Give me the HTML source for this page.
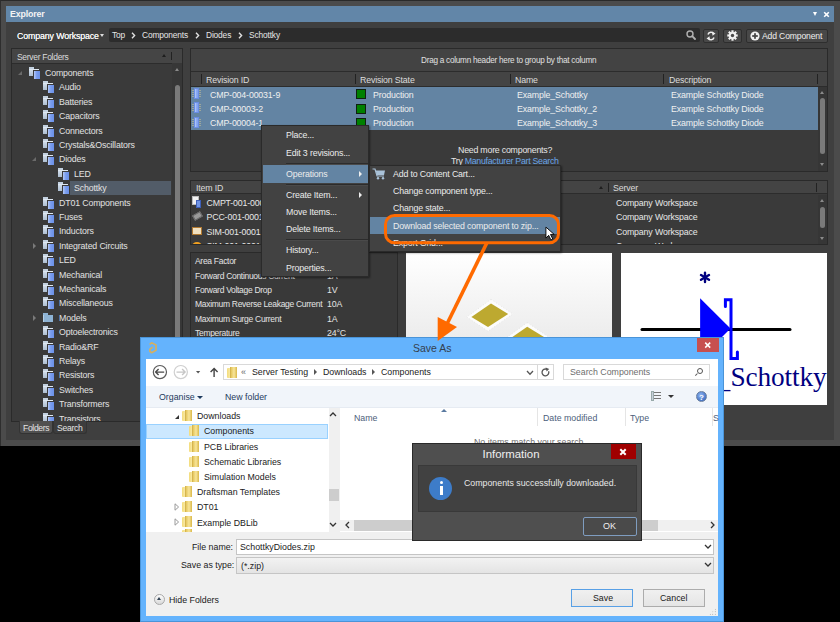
<!DOCTYPE html><html><head><meta charset="utf-8"><style>
*{box-sizing:border-box;margin:0;padding:0}
html,body{width:840px;height:622px;overflow:hidden;background:#000}
body{position:relative;font-family:"Liberation Sans",sans-serif;font-size:8.8px;letter-spacing:-0.15px;color:#e2e2e2}
.a{position:absolute}
.t{position:absolute;white-space:nowrap;line-height:11px}
.cico{position:absolute;width:11px;height:12px}
.cico i{position:absolute;left:0;top:2px;width:9.5px;height:6.5px;background:linear-gradient(#d0dcea,#aebfd2);border-top:1px solid #dfe8f2}
.cico i:before{content:"";position:absolute;left:0;top:-3px;width:4.5px;height:2px;background:#c3d1e0}
.cico b{position:absolute;left:4.5px;top:3.5px;width:6px;height:8px;background:linear-gradient(90deg,#b3c9f8,#7a9dee 45%,#6a90e8);box-shadow:-1px -1px 0 #3b3b3b}
.fold{position:absolute;width:10px;height:7px;background:linear-gradient(90deg,#b5d0e8 0 1px,#8eb3d4 1px)}
.fold:before{content:"";position:absolute;left:0;top:-2px;width:5px;height:2px;background:#8eb3d4}
.chip{position:absolute;width:9px;height:11px}
.chip b{position:absolute;left:2px;top:0;width:5.5px;height:10.5px;background:linear-gradient(90deg,#bcd0ff,#8eaef4 40%,#7d9fee);border:1px solid #6a8de4}
.chip i{position:absolute;left:0;top:1.5px;width:9.5px;height:8px;background:repeating-linear-gradient(rgba(205,195,150,.55) 0 1px,transparent 1px 2px)}
.sq{position:absolute;width:10px;height:10px;background:#008000;border:1px solid #102010}
.menu{position:absolute;background:#424242;border:1px solid #2a2a2a;box-shadow:1px 1px 2px rgba(0,0,0,.45)}
.hl{position:absolute;background:#6384a3}
.w{color:#1a1a1a}
.fd{position:absolute;width:10px;height:11px}
.fd:before{content:"";position:absolute;left:0;top:1px;width:9px;height:10px;background:linear-gradient(90deg,#f3dc7c,#fbeeb0 45%,#e8c859);border-radius:1px 0 0 1px}
.fd:after{content:"";position:absolute;left:3px;top:0;width:6px;height:11px;background:linear-gradient(90deg,#e4c65c,#f8e59a 50%,#d9b84a);border-left:1px solid #d6b550}
</style></head><body>
<div class="a" style="left:0;top:0;width:840px;height:446px;background:#4b4b4b;border-top:1px solid #2a2a2a;border-left:1px solid #2e2e2e"></div>
<div class="a" style="left:6px;top:22px;width:828px;height:418px;background:#3f3f3f"></div>
<div class="a" style="left:6px;top:6px;width:828px;height:16px;background:#6286a8"></div>
<div class="t" style="left:10px;top:9px;font-weight:bold;font-size:8.8px;color:#f4f4f4">Explorer</div>
<div class="a" style="left:812.5px;top:12px;width:0;height:0;border-left:2.5px solid transparent;border-right:2.5px solid transparent;border-top:4px solid #fff"></div>
<svg class="a" style="left:822px;top:10px" width="9" height="9" viewBox="0 0 9 9"><path d="M2.2,2.2 L6.8,6.8 M6.8,2.2 L2.2,6.8" stroke="#fff" stroke-width="1.6"/></svg>
<div class="t" style="left:17px;top:31px;font-size:8.8px;letter-spacing:-0.12px;color:#f4f4f4;text-shadow:0 0 0.3px #fff">Company Workspace</div>
<div class="a" style="left:100px;top:34px;width:0;height:0;border-left:2.5px solid transparent;border-right:2.5px solid transparent;border-top:3px solid #ddd"></div>
<div class="a" style="left:109px;top:28px;width:591px;height:14px;background:#2c2c2c;border-radius:2px"></div>
<div class="t" style="left:112px;top:30px;font-size:8.4px;color:#e6e6e6">Top</div>
<svg class="a" style="left:131px;top:32px" width="5" height="7" viewBox="0 0 5 7"><polyline points="1,0.8 3.6,3.5 1,6.2" fill="none" stroke="#e0e0e0" stroke-width="1.4"/></svg>
<div class="t" style="left:142px;top:30px;font-size:8.4px;color:#e6e6e6">Components</div>
<svg class="a" style="left:195px;top:32px" width="5" height="7" viewBox="0 0 5 7"><polyline points="1,0.8 3.6,3.5 1,6.2" fill="none" stroke="#e0e0e0" stroke-width="1.4"/></svg>
<div class="t" style="left:206px;top:30px;font-size:8.4px;color:#e6e6e6">Diodes</div>
<svg class="a" style="left:238px;top:32px" width="5" height="7" viewBox="0 0 5 7"><polyline points="1,0.8 3.6,3.5 1,6.2" fill="none" stroke="#e0e0e0" stroke-width="1.4"/></svg>
<div class="t" style="left:249px;top:30px;font-size:8.4px;color:#e6e6e6">Schottky</div>
<svg class="a" style="left:686px;top:30px" width="10" height="10" viewBox="0 0 10 10"><circle cx="4" cy="4" r="3" fill="none" stroke="#b0b0b0" stroke-width="1.4"/><line x1="6.2" y1="6.2" x2="9" y2="9" stroke="#b0b0b0" stroke-width="1.8" stroke-linecap="round"/></svg>
<div class="a" style="left:703px;top:29px;width:16px;height:14px;background:#484848;border:1px solid #2e2e2e;border-radius:2px"></div>
<svg class="a" style="left:705px;top:30px" width="12" height="12" viewBox="0 0 12 12"><path d="M3,4.5 A3.2,3.2 0 0 1 8.8,3.8" fill="none" stroke="#eee" stroke-width="1.5"/><polygon points="7,1.5 10.5,3.5 7.5,5.8" fill="#eee"/><path d="M9,7.5 A3.2,3.2 0 0 1 3.2,8.2" fill="none" stroke="#eee" stroke-width="1.5"/><polygon points="5,10.5 1.5,8.5 4.5,6.2" fill="#eee"/></svg>
<div class="a" style="left:723px;top:29px;width:19px;height:14px;background:#484848;border:1px solid #2e2e2e;border-radius:2px"></div>
<svg class="a" style="left:727px;top:30px" width="11" height="11" viewBox="0 0 11 11"><g fill="#f2f2f2"><circle cx="5.5" cy="5.5" r="3.6"/><rect x="4.4" y="0.3" width="2.2" height="10.4"/><rect x="0.3" y="4.4" width="10.4" height="2.2"/><rect x="4.4" y="0.3" width="2.2" height="10.4" transform="rotate(45 5.5 5.5)"/><rect x="4.4" y="0.3" width="2.2" height="10.4" transform="rotate(-45 5.5 5.5)"/></g><circle cx="5.5" cy="5.5" r="1.7" fill="#484848"/></svg>
<div class="a" style="left:746px;top:29px;width:82px;height:14px;background:#484848;border:1px solid #2e2e2e;border-radius:2px"></div>
<svg class="a" style="left:750px;top:31px" width="10" height="10" viewBox="0 0 10 10"><circle cx="5" cy="5" r="4.6" fill="#f0f0f0"/><rect x="4.1" y="2.2" width="1.8" height="5.6" fill="#484848"/><rect x="2.2" y="4.1" width="5.6" height="1.8" fill="#484848"/></svg>
<div class="t" style="left:762px;top:31px;font-size:8.6px;color:#eee">Add Component</div>
<div class="a" style="left:11px;top:48px;width:172px;height:374px;background:#3a3a3a;border:1px solid #2a2a2a"></div>
<div class="a" style="left:12px;top:49px;width:170px;height:15px;background:#454545;border-bottom:1px solid #2c2c2c"></div>
<div class="t" style="left:17px;top:51.5px;color:#dcdcdc;font-size:8.5px;letter-spacing:-0.3px">Server Folders</div>
<div class="a" style="left:162px;top:54px;width:0;height:0;border-left:2.5px solid transparent;border-right:2.5px solid transparent;border-bottom:3px solid #1e1e1e"></div>
<div class="a" style="left:171px;top:52px;width:1px;height:8px;background:#222"></div>
<div class="a" style="left:172px;top:63px;width:10px;height:358px;background:#373737"></div>
<div class="a" style="left:175px;top:68px;width:0;height:0;border-left:2.5px solid transparent;border-right:2.5px solid transparent;border-bottom:3px solid #8a8a8a"></div>
<div class="a" style="left:175px;top:85px;width:5px;height:300px;background:#7a7a7a;border-radius:3px"></div>
<div class="a" style="left:12px;top:64px;width:160px;height:357px;overflow:hidden">
<div class="a" style="left:6px;top:7px;width:0;height:0;border-left:4px solid transparent;border-bottom:4px solid #6a6a6a"></div>
<div class="cico" style="left:17px;top:3px"><i></i><b></b></div>
<div class="t" style="left:33px;top:4px">Components</div>
<div class="cico" style="left:31px;top:17px"><i></i><b></b></div>
<div class="t" style="left:47px;top:18px">Audio</div>
<div class="cico" style="left:31px;top:32px"><i></i><b></b></div>
<div class="t" style="left:47px;top:33px">Batteries</div>
<div class="cico" style="left:31px;top:46px"><i></i><b></b></div>
<div class="t" style="left:47px;top:47px">Capacitors</div>
<div class="cico" style="left:31px;top:61px"><i></i><b></b></div>
<div class="t" style="left:47px;top:62px">Connectors</div>
<div class="cico" style="left:31px;top:75px"><i></i><b></b></div>
<div class="t" style="left:47px;top:76px">Crystals&amp;Oscillators</div>
<div class="a" style="left:20px;top:93px;width:0;height:0;border-left:4px solid transparent;border-bottom:4px solid #6a6a6a"></div>
<div class="cico" style="left:31px;top:89px"><i></i><b></b></div>
<div class="t" style="left:47px;top:90px">Diodes</div>
<div class="cico" style="left:46px;top:104px"><i></i><b></b></div>
<div class="t" style="left:62px;top:105px">LED</div>
<div class="a" style="left:58px;top:117px;width:101px;height:14px;background:#525c68"></div>
<div class="cico" style="left:46px;top:118px"><i></i><b></b></div>
<div class="t" style="left:62px;top:119px">Schottky</div>
<div class="cico" style="left:31px;top:133px"><i></i><b></b></div>
<div class="t" style="left:47px;top:134px">DT01 Components</div>
<div class="cico" style="left:31px;top:147px"><i></i><b></b></div>
<div class="t" style="left:47px;top:148px">Fuses</div>
<div class="cico" style="left:31px;top:161px"><i></i><b></b></div>
<div class="t" style="left:47px;top:162px">Inductors</div>
<div class="a" style="left:21px;top:179px;width:0;height:0;border-top:3px solid transparent;border-bottom:3px solid transparent;border-left:3px solid #7a7a7a"></div>
<div class="cico" style="left:31px;top:176px"><i></i><b></b></div>
<div class="t" style="left:47px;top:177px">Integrated Circuits</div>
<div class="cico" style="left:31px;top:190px"><i></i><b></b></div>
<div class="t" style="left:47px;top:191px">LED</div>
<div class="cico" style="left:31px;top:205px"><i></i><b></b></div>
<div class="t" style="left:47px;top:206px">Mechanical</div>
<div class="cico" style="left:31px;top:219px"><i></i><b></b></div>
<div class="t" style="left:47px;top:220px">Mechanicals</div>
<div class="cico" style="left:31px;top:233px"><i></i><b></b></div>
<div class="t" style="left:47px;top:234px">Miscellaneous</div>
<div class="a" style="left:21px;top:251px;width:0;height:0;border-top:3px solid transparent;border-bottom:3px solid transparent;border-left:3px solid #7a7a7a"></div>
<div class="fold" style="left:31px;top:251px"></div>
<div class="t" style="left:47px;top:249px">Models</div>
<div class="cico" style="left:31px;top:262px"><i></i><b></b></div>
<div class="t" style="left:47px;top:263px">Optoelectronics</div>
<div class="cico" style="left:31px;top:277px"><i></i><b></b></div>
<div class="t" style="left:47px;top:278px">Radio&amp;RF</div>
<div class="cico" style="left:31px;top:291px"><i></i><b></b></div>
<div class="t" style="left:47px;top:292px">Relays</div>
<div class="cico" style="left:31px;top:305px"><i></i><b></b></div>
<div class="t" style="left:47px;top:306px">Resistors</div>
<div class="cico" style="left:31px;top:320px"><i></i><b></b></div>
<div class="t" style="left:47px;top:321px">Switches</div>
<div class="cico" style="left:31px;top:334px"><i></i><b></b></div>
<div class="t" style="left:47px;top:335px">Transformers</div>
<div class="cico" style="left:31px;top:349px"><i></i><b></b></div>
<div class="t" style="left:47px;top:350px">Transistors</div>
</div>
<div class="a" style="left:19px;top:421px;width:34px;height:13px;background:#505050;border-radius:0 0 3px 3px;border:1px solid #333;border-top:none"></div>
<div class="t" style="left:23px;top:423px;color:#e4e4e4;font-size:8.6px;letter-spacing:-0.35px">Folders</div>
<div class="a" style="left:53px;top:421px;width:34px;height:13px;background:#3d3d3d;border-radius:0 0 3px 3px;border:1px solid #333;border-top:none"></div>
<div class="t" style="left:57px;top:423px;color:#e4e4e4;font-size:8.6px;letter-spacing:-0.3px">Search</div>
<div class="a" style="left:190px;top:48px;width:638px;height:124px;background:#3a3a3a;border:1px solid #2a2a2a"></div>
<div class="a" style="left:191px;top:49px;width:636px;height:23px;background:#434343;border-bottom:1px solid #2c2c2c"></div>
<div class="t" style="left:421px;top:55px;font-size:8.2px;letter-spacing:-0.25px;color:#e0e0e0">Drag a column header here to group by that column</div>
<div class="a" style="left:191px;top:72px;width:636px;height:15px;background:#444;border-bottom:1px solid #2c2c2c"></div>
<div class="a" style="left:201px;top:74px;width:1px;height:10px;background:#222"></div>
<div class="a" style="left:355px;top:74px;width:1px;height:10px;background:#222"></div>
<div class="a" style="left:510px;top:74px;width:1px;height:10px;background:#222"></div>
<div class="a" style="left:663px;top:74px;width:1px;height:10px;background:#222"></div>
<div class="a" style="left:817px;top:74px;width:1px;height:10px;background:#222"></div>
<div class="t" style="left:206px;top:75px;color:#dcdcdc">Revision ID</div>
<div class="t" style="left:360px;top:75px;color:#dcdcdc">Revision State</div>
<div class="t" style="left:515px;top:75px;color:#dcdcdc">Name</div>
<div class="t" style="left:669px;top:75px;color:#dcdcdc">Description</div>
<div class="a" style="left:191px;top:87px;width:627px;height:43px;background:#6384a3"></div>
<div class="chip" style="left:191.5px;top:88px"><i></i><b></b></div>
<div class="t" style="left:210px;top:90px;color:#f0f0f0">CMP-004-00031-9</div>
<div class="sq" style="left:356px;top:89px"></div>
<div class="t" style="left:373px;top:90px;color:#f0f0f0">Production</div>
<div class="t" style="left:517px;top:90px;color:#f0f0f0">Example_Schottky</div>
<div class="t" style="left:671px;top:90px;color:#f0f0f0">Example Schottky Diode</div>
<div class="chip" style="left:191.5px;top:102px"><i></i><b></b></div>
<div class="t" style="left:210px;top:104px;color:#f0f0f0">CMP-00003-2</div>
<div class="sq" style="left:356px;top:104px"></div>
<div class="t" style="left:373px;top:104px;color:#f0f0f0">Production</div>
<div class="t" style="left:517px;top:104px;color:#f0f0f0">Example_Schottky_2</div>
<div class="t" style="left:671px;top:104px;color:#f0f0f0">Example Schottky Diode</div>
<div class="chip" style="left:191.5px;top:117px"><i></i><b></b></div>
<div class="t" style="left:210px;top:118px;color:#f0f0f0">CMP-00004-1</div>
<div class="sq" style="left:356px;top:118px"></div>
<div class="t" style="left:373px;top:118px;color:#f0f0f0">Production</div>
<div class="t" style="left:517px;top:118px;color:#f0f0f0">Example_Schottky_3</div>
<div class="t" style="left:671px;top:118px;color:#f0f0f0">Example Schottky Diode</div>
<div class="t" style="left:458px;top:145px;color:#e6e6e6;letter-spacing:-0.22px">Need more components?</div>
<div class="t" style="left:451px;top:155.5px;color:#e6e6e6;letter-spacing:-0.28px">Try <span style="color:#6aa6e8">Manufacturer Part Search</span></div>
<div class="a" style="left:818px;top:87px;width:9px;height:84px;background:#363636"></div>
<div class="a" style="left:820px;top:91px;width:0;height:0;border-left:2.5px solid transparent;border-right:2.5px solid transparent;border-bottom:3px solid #8a8a8a"></div>
<div class="a" style="left:820px;top:98px;width:5px;height:56px;background:#7a7a7a;border-radius:3px"></div>
<div class="a" style="left:820px;top:163px;width:0;height:0;border-left:2.5px solid transparent;border-right:2.5px solid transparent;border-top:3px solid #8a8a8a"></div>
<div class="a" style="left:190px;top:180px;width:638px;height:65px;background:#3a3a3a;border:1px solid #2a2a2a"></div>
<div class="a" style="left:191px;top:181px;width:636px;height:13px;background:#444;border-bottom:1px solid #2c2c2c"></div>
<div class="t" style="left:196px;top:183px;color:#dcdcdc">Item ID</div>
<div class="a" style="left:599px;top:186px;width:0;height:0;border-left:2.5px solid transparent;border-right:2.5px solid transparent;border-bottom:3px solid #1e1e1e"></div>
<div class="a" style="left:608px;top:183px;width:1px;height:9px;background:#222"></div>
<div class="a" style="left:816px;top:183px;width:1px;height:9px;background:#222"></div>
<div class="t" style="left:613px;top:183px;color:#dcdcdc">Server</div>
<div class="a" style="left:191px;top:195px;width:626px;height:49px;overflow:hidden">
<div class="a" style="left:1px;top:1px;width:7px;height:9px;background:#f2f2f2;border:1px solid #bbb"></div><div class="a" style="left:5px;top:5px;width:5px;height:8px;background:#6f93e6;border:1px solid #3d5fb8"></div>
<div class="t" style="left:15.5px;top:3px;color:#e8e8e8">CMPT-001-0001</div>
<div class="t" style="left:425px;top:3px;color:#e8e8e8">Company Workspace</div>
<div class="a" style="left:2px;top:18px;width:9px;height:6px;background:#9a9a9a;transform:rotate(-30deg);border:1px solid #666"></div>
<div class="t" style="left:15.5px;top:17px;color:#e8e8e8">PCC-001-0001</div>
<div class="t" style="left:425px;top:17px;color:#e8e8e8">Company Workspace</div>
<div class="a" style="left:1px;top:32px;width:10px;height:8px;background:#f0e0c0;border:1px solid #b07830"></div>
<div class="t" style="left:15.5px;top:32px;color:#e8e8e8">SIM-001-0001</div>
<div class="t" style="left:425px;top:32px;color:#e8e8e8">Company Workspace</div>
<div class="a" style="left:1px;top:47px;width:10px;height:8px;background:#f0a020;border-radius:50% 50% 0 0"></div>
<div class="t" style="left:15.5px;top:46px;color:#e8e8e8">SIM-001-0001</div>
<div class="t" style="left:425px;top:46px;color:#e8e8e8">Company Workspace</div>
</div>
<div class="a" style="left:818px;top:195px;width:9px;height:49px;background:#363636"></div>
<div class="a" style="left:820px;top:199px;width:0;height:0;border-left:2.5px solid transparent;border-right:2.5px solid transparent;border-bottom:3px solid #8a8a8a"></div>
<div class="a" style="left:820px;top:207px;width:5px;height:21px;background:#7a7a7a;border-radius:3px"></div>
<div class="a" style="left:820px;top:237px;width:0;height:0;border-left:2.5px solid transparent;border-right:2.5px solid transparent;border-top:3px solid #8a8a8a"></div>
<div class="a" style="left:190px;top:252px;width:208px;height:95px;background:#393939;border:1px solid #2a2a2a"></div>
<div class="t" style="left:195px;top:256px;color:#e4e4e4;font-size:8.5px;letter-spacing:-0.3px">Area Factor</div>
<div class="t" style="left:195px;top:271px;color:#e4e4e4;font-size:8.5px;letter-spacing:-0.3px">Forward Continuous Current</div>
<div class="t" style="left:327px;top:271px;color:#e4e4e4">1A</div>
<div class="t" style="left:195px;top:285px;color:#e4e4e4;font-size:8.5px;letter-spacing:-0.3px">Forward Voltage Drop</div>
<div class="t" style="left:327px;top:285px;color:#e4e4e4">1V</div>
<div class="t" style="left:195px;top:299px;color:#e4e4e4;font-size:8.5px;letter-spacing:-0.3px">Maximum Reverse Leakage Current</div>
<div class="t" style="left:327px;top:299px;color:#e4e4e4">10A</div>
<div class="t" style="left:195px;top:314px;color:#e4e4e4;font-size:8.5px;letter-spacing:-0.3px">Maximum Surge Current</div>
<div class="t" style="left:327px;top:314px;color:#e4e4e4">1A</div>
<div class="t" style="left:195px;top:328px;color:#e4e4e4;font-size:8.5px;letter-spacing:-0.3px">Temperature</div>
<div class="t" style="left:327px;top:328px;color:#e4e4e4">24&#176;C</div>
<div class="a" style="left:398px;top:252px;width:8px;height:95px;background:#3c3c3c"></div>
<div class="a" style="left:406px;top:253px;width:206px;height:90px;background:linear-gradient(#ffffff,#ebebeb)"></div>
<svg class="a" style="left:406px;top:253px" width="206" height="90" viewBox="0 0 206 90"><polygon points="85.0,46.3 106.8,61.0 82.0,78.2 60.8,64.0" fill="#fcfcfc" stroke="#d8d8d8" stroke-width="0.6" stroke-dasharray="1 2"/><polygon points="85.0,50.4 102.2,61.0 82.0,74.0 65.4,64.0" fill="#bda930"/><polygon points="121.2,69.6 143.0,84.3 118.2,101.5 97.0,87.3" fill="#fcfcfc" stroke="#d8d8d8" stroke-width="0.6" stroke-dasharray="1 2"/><polygon points="121.2,73.7 138.4,84.3 118.2,97.3 101.6,87.3" fill="#bda930"/></svg>
<div class="a" style="left:621px;top:253px;width:206px;height:152px;background:#fff"></div>
<svg class="a" style="left:621px;top:253px" width="206" height="152" viewBox="0 0 206 152"><g stroke="#000080" stroke-width="2.4" stroke-linecap="round"><line x1="84" y1="19.8" x2="84" y2="29"/><line x1="80" y1="22" x2="88" y2="26.8"/><line x1="80" y1="26.8" x2="88" y2="22"/></g><line x1="21" y1="76.5" x2="169" y2="76.5" stroke="#000" stroke-width="3" stroke-linecap="round"/><polygon points="79.1,45.2 109.5,75.6 79.1,106" fill="#0000ff"/><polyline points="104.4,53.4 104.4,46.8 110,46.8 110,105.5 116.4,105.5 116.4,99" fill="none" stroke="#0000ff" stroke-width="3" stroke-linejoin="miter" stroke-linecap="round"/><line x1="97" y1="137.6" x2="109.5" y2="137.6" stroke="#000080" stroke-width="1.3"/><text x="109.6" y="132.7" font-family="Liberation Serif" font-size="27.3" fill="#000080">Schottky</text></svg>
<div class="menu" style="left:261px;top:125px;width:108px;height:152px"></div>
<div class="hl" style="left:263px;top:165px;width:105px;height:18px"></div>
<div class="a" style="left:286px;top:163px;width:82px;height:1px;background:#2c2c2c"></div>
<div class="a" style="left:286px;top:164px;width:82px;height:1px;background:#4a4a4a"></div>
<div class="a" style="left:286px;top:184px;width:82px;height:1px;background:#2c2c2c"></div>
<div class="a" style="left:286px;top:185px;width:82px;height:1px;background:#4a4a4a"></div>
<div class="a" style="left:286px;top:239px;width:82px;height:1px;background:#2c2c2c"></div>
<div class="a" style="left:286px;top:240px;width:82px;height:1px;background:#4a4a4a"></div>
<div class="t" style="left:286px;top:130px;color:#ececec">Place...</div>
<div class="t" style="left:286px;top:148px;color:#ececec">Edit 3 revisions...</div>
<div class="t" style="left:286px;top:169px;color:#ececec">Operations</div>
<div class="t" style="left:286px;top:190px;color:#ececec">Create Item...</div>
<div class="t" style="left:286px;top:207px;color:#ececec">Move Items...</div>
<div class="t" style="left:286px;top:224px;color:#ececec">Delete Items...</div>
<div class="t" style="left:286px;top:245px;color:#ececec">History...</div>
<div class="t" style="left:286px;top:263px;color:#ececec">Properties...</div>
<div class="a" style="left:359px;top:171px;width:0;height:0;border-top:3px solid transparent;border-bottom:3px solid transparent;border-left:3px solid #eee"></div>
<div class="a" style="left:359px;top:192px;width:0;height:0;border-top:3px solid transparent;border-bottom:3px solid transparent;border-left:3px solid #eee"></div>
<div class="menu" style="left:369px;top:165px;width:192px;height:87px"></div>
<div class="hl" style="left:370px;top:217px;width:190px;height:17px"></div>
<div class="t" style="left:393px;top:169px;color:#ececec">Add to Content Cart...</div>
<div class="t" style="left:393px;top:186px;color:#ececec">Change component type...</div>
<div class="t" style="left:393px;top:203px;color:#ececec">Change state...</div>
<div class="t" style="left:393px;top:221px;color:#ececec">Download selected component to zip...</div>
<div class="t" style="left:393px;top:238px;color:#ececec">Export Grid...</div>
<svg class="a" style="left:372px;top:168px" width="14" height="12" viewBox="0 0 14 12"><polyline points="0.5,1 3,1 5,8 12,8" fill="none" stroke="#a9c2d8" stroke-width="1.2"/><polygon points="3.6,2.5 13,2.5 12,7 5,7" fill="#a9c2d8"/><circle cx="6" cy="10.3" r="1.2" fill="#a9c2d8"/><circle cx="11" cy="10.3" r="1.2" fill="#a9c2d8"/></svg>
<svg class="a" style="left:544.5px;top:226px" width="11" height="15" viewBox="0 0 12 16"><polygon points="1,1 1,13 4,10 6.5,15 8.5,14 6,9 10,9" fill="#fff" stroke="#000" stroke-width="1"/></svg>
<div class="a" style="left:140px;top:337px;width:584px;height:285px;background:#64b3fd;border:1px solid #4a94d8"></div>
<div class="t" style="left:413px;top:342px;font-size:10.5px;letter-spacing:0;line-height:12px;color:#34404e">Save As</div>
<div class="a" style="left:697px;top:338px;width:22px;height:14px;background:#c75050"></div>
<svg class="a" style="left:703px;top:340px" width="10" height="10" viewBox="0 0 10 10"><path d="M2.2,2.6 L7.2,7.6 M7.2,2.6 L2.2,7.6" stroke="#fff" stroke-width="1.5"/></svg>
<svg class="a" style="left:146px;top:340px" width="14" height="16" viewBox="0 0 14 16"><polyline points="4.2,3.9 5.6,2.8 10,5 10,10.3 5.6,12.7 3.9,11.4 3.9,9.3 6.4,7.4" fill="none" stroke="#d4b062" stroke-width="1.7" stroke-linejoin="round" stroke-linecap="round"/></svg>
<div class="a" style="left:146px;top:359px;width:572px;height:257px;background:#f0f0f0"></div>
<div class="a" style="left:146px;top:359px;width:572px;height:27px;background:#fff"></div>
<div class="a" style="left:146px;top:386px;width:572px;height:22px;background:#f1f5fa;border-bottom:1px solid #e6ebf2"></div>
<svg class="a" style="left:146px;top:359px" width="80" height="27" viewBox="0 0 80 27"><circle cx="13.9" cy="13.1" r="6.6" fill="none" stroke="#5a5a5a" stroke-width="1.2"/><path d="M9.6,13.1 H18.2 M12.6,10.1 L9.6,13.1 L12.6,16.1" fill="none" stroke="#4a4a4a" stroke-width="1.4"/><circle cx="34.8" cy="13.1" r="6.6" fill="none" stroke="#cfcfcf" stroke-width="1.2"/><path d="M30.5,13.1 H39.1 M36.1,10.1 L39.1,13.1 L36.1,16.1" fill="none" stroke="#c6c6c6" stroke-width="1.4"/><polygon points="50,12 54.2,12 52.1,14.6" fill="#555"/><path d="M68.1,18 V9.8 M64.6,13 L68.1,9.5 L71.6,13" fill="none" stroke="#444" stroke-width="1.4"/></svg>
<div class="a" style="left:223px;top:364px;width:331px;height:16px;background:#fff;border:1px solid #d9d9d9"></div>
<div class="fd" style="left:227px;top:367px"></div>
<div class="t" style="left:241px;top:367px;font-size:9px;color:#666">&#171;</div>
<div class="t" style="left:252px;top:367px;font-size:8.8px;letter-spacing:0;color:#1a1a1a">Server Testing</div>
<div class="t" style="left:323px;top:367px;font-size:8.8px;letter-spacing:0;color:#1a1a1a">Downloads</div>
<div class="t" style="left:381px;top:367px;font-size:8.8px;letter-spacing:0;color:#1a1a1a">Components</div>
<div class="a" style="left:314px;top:369px;width:0;height:0;border-top:3px solid transparent;border-bottom:3px solid transparent;border-left:3px solid #555"></div>
<div class="a" style="left:372px;top:369px;width:0;height:0;border-top:3px solid transparent;border-bottom:3px solid transparent;border-left:3px solid #555"></div>
<svg class="a" style="left:526px;top:370px" width="8" height="6" viewBox="0 0 8 6"><polyline points="1,1 4,4.2 7,1" fill="none" stroke="#555" stroke-width="1.3"/></svg>
<div class="a" style="left:537px;top:364px;width:1px;height:16px;background:#d9d9d9"></div>
<svg class="a" style="left:540px;top:367px" width="11" height="11" viewBox="0 0 11 11"><path d="M8.6,4.2 A3.4,3.4 0 1 1 6.8,2.3" fill="none" stroke="#555" stroke-width="1.3"/><polygon points="5.6,0.4 9.2,1.9 6.6,4.6" fill="#555"/></svg>
<div class="a" style="left:563px;top:364px;width:147px;height:16px;background:#fff;border:1px solid #d9d9d9"></div>
<div class="t" style="left:570px;top:367px;font-size:8.8px;letter-spacing:0;color:#6d6d6d">Search Components</div>
<div class="a" style="left:697px;top:368px;width:6px;height:6px;border:1.2px solid #555;border-radius:50%"></div>
<div class="a" style="left:695px;top:374px;width:3px;height:1.3px;background:#555;transform:rotate(-45deg)"></div>
<div class="t" style="left:159px;top:392px;font-size:8.8px;letter-spacing:0;color:#1e3b5e">Organise</div>
<div class="a" style="left:197px;top:396px;width:0;height:0;border-left:3px solid transparent;border-right:3px solid transparent;border-top:3px solid #1e3b5e"></div>
<div class="t" style="left:225px;top:392px;font-size:8.8px;letter-spacing:0;color:#1e3b5e">New folder</div>
<div class="a" style="left:651px;top:392px;width:10px;height:9px;background:repeating-linear-gradient(#777 0 1px,transparent 1px 3px)"></div>
<div class="a" style="left:651px;top:391px;width:3px;height:10px;background:#c8d0dc;border:1px solid #9aa"></div>
<div class="a" style="left:668px;top:395px;width:0;height:0;border-left:3px solid transparent;border-right:3px solid transparent;border-top:3px solid #333"></div>
<div class="a" style="left:696px;top:391px;width:11px;height:11px;border-radius:50%;background:radial-gradient(circle at 40% 35%,#8fb4f0,#2a5db8);border:1px solid #6a7f9f"></div>
<div class="t" style="left:699px;top:392px;font-size:8px;font-weight:bold;color:#fff">?</div>
<div class="a" style="left:146px;top:408px;width:183px;height:124px;background:#fff"></div>
<div class="a" style="left:146px;top:424px;width:182px;height:15px;background:#cce8ff;border:1px solid #99d1ff"></div>
<div class="a" style="left:146px;top:408px;width:183px;height:124px;overflow:hidden">
<div class="a" style="left:29px;top:7px;width:0;height:0;border-left:4px solid transparent;border-bottom:4px solid #333"></div>
<div class="fd" style="left:36px;top:2px"></div>
<div class="t" style="left:51px;top:3px;font-size:8.8px;letter-spacing:0;color:#1a1a1a">Downloads</div>
<div class="fd" style="left:43px;top:17px"></div>
<div class="t" style="left:58px;top:18px;font-size:8.8px;letter-spacing:0;color:#1a1a1a">Components</div>
<div class="fd" style="left:43px;top:33px"></div>
<div class="t" style="left:58px;top:34px;font-size:8.8px;letter-spacing:0;color:#1a1a1a">PCB Libraries</div>
<div class="fd" style="left:43px;top:48px"></div>
<div class="t" style="left:58px;top:49px;font-size:8.8px;letter-spacing:0;color:#1a1a1a">Schematic Libraries</div>
<div class="fd" style="left:43px;top:63px"></div>
<div class="t" style="left:58px;top:64px;font-size:8.8px;letter-spacing:0;color:#1a1a1a">Simulation Models</div>
<div class="fd" style="left:36px;top:78px"></div>
<div class="t" style="left:51px;top:79px;font-size:8.8px;letter-spacing:0;color:#1a1a1a">Draftsman Templates</div>
<svg class="a" style="left:28px;top:95px" width="6" height="8" viewBox="0 0 6 8"><polygon points="1,0.8 4.6,4 1,7.2" fill="none" stroke="#9a9a9a" stroke-width="1"/></svg>
<div class="fd" style="left:36px;top:93px"></div>
<div class="t" style="left:51px;top:94px;font-size:8.8px;letter-spacing:0;color:#1a1a1a">DT01</div>
<svg class="a" style="left:28px;top:110px" width="6" height="8" viewBox="0 0 6 8"><polygon points="1,0.8 4.6,4 1,7.2" fill="none" stroke="#9a9a9a" stroke-width="1"/></svg>
<div class="fd" style="left:36px;top:108px"></div>
<div class="t" style="left:51px;top:110px;font-size:8.8px;letter-spacing:0;color:#1a1a1a">Example DBLib</div>
<div class="fd" style="left:36px;top:121px"></div>
</div>
<div class="a" style="left:329px;top:408px;width:11px;height:124px;background:#f0f0f0"></div>
<svg class="a" style="left:329px;top:411px" width="8" height="7" viewBox="0 0 8 7"><polyline points="1,5 4,2 7,5" fill="none" stroke="#333" stroke-width="1.3"/></svg>
<div class="a" style="left:329px;top:489px;width:10px;height:12px;background:#cdcdcd"></div>
<svg class="a" style="left:329px;top:521px" width="8" height="7" viewBox="0 0 8 7"><polyline points="1,2 4,5 7,2" fill="none" stroke="#333" stroke-width="1.3"/></svg>
<div class="a" style="left:340px;top:408px;width:378px;height:124px;background:#fff"></div>
<div class="a" style="left:537px;top:408px;width:1px;height:18px;background:#e5e5e5"></div>
<div class="a" style="left:625px;top:408px;width:1px;height:18px;background:#e5e5e5"></div>
<div class="a" style="left:712px;top:408px;width:1px;height:18px;background:#e5e5e5"></div>
<div class="t" style="left:354px;top:413px;font-size:8.8px;letter-spacing:0;color:#4c607a">Name</div>
<div class="t" style="left:543px;top:413px;font-size:8.8px;letter-spacing:0;color:#4c607a">Date modified</div>
<div class="t" style="left:630px;top:413px;font-size:8.8px;letter-spacing:0;color:#4c607a">Type</div>
<div class="t" style="left:713px;top:413px;font-size:8.8px;letter-spacing:0;color:#4c607a">S</div>
<div class="a" style="left:441px;top:409px;width:0;height:0;border-left:3px solid transparent;border-right:3px solid transparent;border-bottom:3px solid #5a7aa0"></div>
<div class="t" style="left:474px;top:437px;font-size:8.8px;letter-spacing:0;color:#6d6d6d">No items match your search.</div>
<div class="a" style="left:340px;top:520px;width:378px;height:11px;background:#f0f0f0"></div>
<div class="a" style="left:354px;top:520px;width:304px;height:11px;background:#cdcdcd"></div>
<svg class="a" style="left:344px;top:521px" width="7" height="8" viewBox="0 0 7 8"><polyline points="5,1 2,4 5,7" fill="none" stroke="#333" stroke-width="1.3"/></svg>
<svg class="a" style="left:709px;top:521px" width="7" height="8" viewBox="0 0 7 8"><polyline points="2,1 5,4 2,7" fill="none" stroke="#333" stroke-width="1.3"/></svg>
<div class="t" style="left:192px;top:542px;font-size:8.8px;letter-spacing:0;color:#1a1a1a">File name:</div>
<div class="a" style="left:236px;top:539px;width:478px;height:16px;background:#fff;border:1px solid #c5c5c5"></div>
<div class="t" style="left:240px;top:542px;font-size:8.8px;letter-spacing:0;color:#1a1a1a">SchottkyDiodes.zip</div>
<div class="t" style="left:181px;top:560px;font-size:8.8px;letter-spacing:0;color:#1a1a1a">Save as type:</div>
<div class="a" style="left:236px;top:557px;width:478px;height:17px;background:linear-gradient(#f2f2f2,#e4e4e4);border:1px solid #c5c5c5"></div>
<div class="t" style="left:241px;top:561px;font-size:8.8px;letter-spacing:0;color:#1a1a1a">(*.zip)</div>
<svg class="a" style="left:704px;top:544px" width="8" height="6" viewBox="0 0 8 6"><polyline points="1,1 4,4 7,1" fill="none" stroke="#333" stroke-width="1.3"/></svg>
<svg class="a" style="left:704px;top:562px" width="8" height="6" viewBox="0 0 8 6"><polyline points="1,1 4,4 7,1" fill="none" stroke="#333" stroke-width="1.3"/></svg>
<div class="a" style="left:154px;top:594px;width:11px;height:11px;border-radius:50%;background:linear-gradient(#fdfdfd,#d8d8d8);border:1px solid #a8a8a8"></div>
<div class="a" style="left:157px;top:597px;width:0;height:0;border-left:2.5px solid transparent;border-right:2.5px solid transparent;border-bottom:3px solid #345"></div>
<div class="t" style="left:169px;top:595px;font-size:8.8px;letter-spacing:0;color:#1a1a1a">Hide Folders</div>
<div class="a" style="left:571px;top:589px;width:62px;height:18px;background:linear-gradient(#f0f0f0,#e5e5e5);border:1px solid #58a0e6"></div>
<div class="t" style="left:593px;top:593px;font-size:8.8px;letter-spacing:0;color:#1a1a1a">Save</div>
<div class="a" style="left:643px;top:589px;width:62px;height:18px;background:linear-gradient(#f0f0f0,#e5e5e5);border:1px solid #acacac"></div>
<div class="t" style="left:660px;top:593px;font-size:8.8px;letter-spacing:0;color:#1a1a1a">Cancel</div>
<div class="a" style="left:709px;top:608px;width:7px;height:7px;background:radial-gradient(circle,#999 0.6px,transparent 0.8px) 0 0/2.5px 2.5px;clip-path:polygon(100% 0,100% 100%,0 100%)"></div>
<div class="a" style="left:412px;top:443px;width:230px;height:98px;background:#4f4f4f;border:1px solid #2a2a2a"></div>
<div class="t" style="left:482.5px;top:448px;font-size:11.4px;letter-spacing:0;line-height:13px;color:#f0f0f0">Information</div>
<div class="a" style="left:611px;top:444px;width:25px;height:15px;background:#a00000"></div>
<svg class="a" style="left:618px;top:447px" width="10" height="10" viewBox="0 0 10 10"><path d="M2.3,2.3 L7.7,7.7 M7.7,2.3 L2.3,7.7" stroke="#fff" stroke-width="2"/></svg>
<div class="a" style="left:418px;top:465px;width:219px;height:47px;background:#414141;border:1px solid #393939"></div>
<div class="a" style="left:429px;top:477px;width:23px;height:23px;border-radius:50%;background:#3d7cc9"></div>
<div class="a" style="left:439.5px;top:486px;width:3px;height:9px;background:#fff"></div>
<div class="a" style="left:439.5px;top:481px;width:3px;height:3px;background:#fff;border-radius:50%"></div>
<div class="t" style="left:464px;top:478px;font-size:8.8px;letter-spacing:0;color:#e8e8e8">Components successfully downloaded.</div>
<div class="a" style="left:583px;top:517px;width:54px;height:19px;background:#4a4a4a;border:1px solid #7f9dc0;border-radius:2px"></div>
<div class="t" style="left:603px;top:521px;font-size:9px;letter-spacing:0;color:#f0f0f0">OK</div>
<svg class="a" style="left:0;top:0" width="840" height="622" viewBox="0 0 840 622"><rect x="385.5" y="215.5" width="173" height="27.3" rx="9" ry="9" fill="none" stroke="#ff6a00" stroke-width="3"/><line x1="486.8" y1="243" x2="447" y2="324" stroke="#ff6a00" stroke-width="3.6"/><polygon points="437.7,341 437.7,317 457,327" fill="#ff6a00"/></svg>
</body></html>
